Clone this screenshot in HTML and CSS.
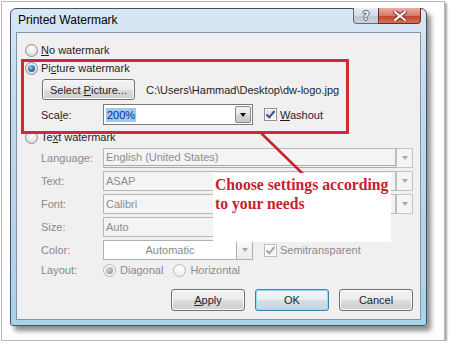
FILE: index.html
```html
<!DOCTYPE html>
<html lang="en">
<head>
  <meta charset="UTF-8">
  <meta name="viewport" content="width=device-width, initial-scale=1.0">
  <title>Printed Watermark</title>
  <link rel="stylesheet" href="styles.css">
</head>
<body>
<div class="sheet">
  <div class="window">
    <div class="titlebar">
      <span class="title">Printed Watermark</span>
      <div class="caption-buttons">
        <span class="cap-btn help">?</span>
        <span class="cap-btn close">
          <svg width="14" height="10" viewBox="0 0 14 10">
            <path d="M2 1 L12 9 M12 1 L2 9" stroke="#6b2a22" stroke-width="4" stroke-linecap="square"/>
            <path d="M2 1 L12 9 M12 1 L2 9" stroke="#fff" stroke-width="2.2" stroke-linecap="square"/>
          </svg>
        </span>
      </div>
    </div>
    <div class="client">
      <div class="option"><span class="radio"></span><span><u>N</u>o watermark</span></div>
      <div class="option second"><span class="radio checked"></span><span>Pi<u>c</u>ture watermark</span></div>
      <div class="picture-row">
        <button class="btn select">Select <u>P</u>icture...</button>
        <span class="path">C:\Users\Hammad\Desktop\dw-logo.jpg</span>
      </div>
      <div class="field-row scale-row">
        <span class="label">Sca<u>l</u>e:</span>
        <div class="combo edit">
          <span class="entry"><span class="selected">200%</span></span>
          <span class="drop"><i class="arrow"></i></span>
        </div>
        <span class="check checked"></span><span class="check-label"><u>W</u>ashout</span>
      </div>
      <div class="option third"><span class="radio"></span><span>Te<u>x</u>t watermark</span></div>

      <div class="fields">
        <div class="field-row">
          <span class="label off">Language:</span>
          <div class="combo off wide">
            <span class="entry lang">English (United States)</span>
            <span class="drop"><i class="arrow"></i></span>
          </div>
        </div>
        <div class="field-row">
          <span class="label off">Text:</span>
          <div class="combo off wide">
            <span class="entry">ASAP</span>
            <span class="drop"><i class="arrow"></i></span>
          </div>
        </div>
        <div class="field-row">
          <span class="label off">Font:</span>
          <div class="combo off wide">
            <span class="entry">Calibri</span>
            <span class="drop"><i class="arrow"></i></span>
          </div>
        </div>
        <div class="field-row">
          <span class="label off">Size:</span>
          <div class="combo off short">
            <span class="entry">Auto</span>
          </div>
        </div>
        <div class="field-row">
          <span class="label off">Color:</span>
          <div class="combo color">
            <span class="entry">Automatic</span>
            <span class="drop"><i class="arrow"></i></span>
          </div>
          <span class="check checked off"></span><span class="check-label off">Semitransparent</span>
        </div>
      </div>

      <div class="field-row layout-row">
        <span class="label off">Layout:</span>
        <span class="radio checked off"></span><span class="radio-label off">Diagonal</span>
        <span class="radio off"></span><span class="radio-label off">Horizontal</span>
      </div>

      <div class="actions">
        <button class="btn"><u>A</u>pply</button>
        <button class="btn default">OK</button>
        <button class="btn">Cancel</button>
      </div>

      <!-- annotation drawn over the dialog -->
      <div class="mark-box"></div>
      <svg class="mark-line" width="405" height="288">
        <line x1="244" y1="100" x2="287" y2="142" stroke="#c8202e" stroke-width="2.5"/>
      </svg>
      <div class="callout">Choose settings according<br>to your needs</div>
    </div>
  </div>
</div>
</body>
</html>
```

FILE: styles.css
```css
body {
  margin: 0;
  background: #fff;
  font-family: "Liberation Sans", Arial, sans-serif;
  font-size: 11px;
  color: #1e1e1e;
}

.sheet {
  box-sizing: border-box;
  width: 444px;
  height: 340px;
  margin: 1px 0 0 1px;
  padding: 6px 0 0 8px;
  border: 1px solid #b8b8b8;
  box-shadow: 2px 2px 2px rgba(0, 0, 0, 0.35);
  background: #fff;
}

.window {
  box-sizing: border-box;
  width: 417px;
  height: 318px;
  padding: 0 5px 5px 5px;
  display: flex;
  flex-direction: column;
  border: 1px solid #415364;
  border-radius: 6px 6px 3px 3px;
  background: linear-gradient(180deg, #d9e7f4 0%, #c3d9ed 30%, #b4d1ea 80%, #a6d4ec 100%);
  box-shadow: 4px 5px 5px rgba(0, 0, 0, 0.45);
}

.titlebar {
  height: 23px;
  display: flex;
  justify-content: space-between;
  align-items: flex-start;
}

.title {
  padding-left: 2px;
  line-height: 22px;
  font-size: 12px;
  color: #000;
}

.caption-buttons {
  display: flex;
  margin-top: -1px;
}

.cap-btn {
  box-sizing: border-box;
  height: 16px;
  display: flex;
  align-items: center;
  justify-content: center;
  border: 1px solid #5d6b7a;
  border-top: none;
}

.help {
  width: 25px;
  border-right: none;
  border-radius: 0 0 0 4px;
  background: linear-gradient(180deg, #e8eef4 0%, #d3dbe4 50%, #bdc7d2 51%, #c9d3dd 100%);
  font: bold 12px "DejaVu Sans", sans-serif;
  color: #f4f6f8;
  text-shadow: -1px 0 #5b6470, 1px 0 #5b6470, 0 -1px #5b6470, 0 1px #5b6470;
}

.close {
  width: 43px;
  border-color: #6e2a22;
  border-radius: 0 0 4px 0;
  background: linear-gradient(180deg, #e7aea4 0%, #d7786a 50%, #c6402f 51%, #d9704f 100%);
}

.client {
  flex: 1;
  position: relative;
  padding: 9px 7px 0 8px;
  display: flex;
  flex-direction: column;
  border: 1px solid #8497aa;
  background: #f0f0f0;
}

u {
  text-decoration: underline;
  text-underline-offset: 1px;
}

.option {
  height: 16px;
  display: flex;
  align-items: center;
  gap: 3px;
}

.option.second {
  margin-top: 2px;
}

.option.third {
  margin-top: 4px;
}

.radio {
  box-sizing: border-box;
  width: 13px;
  height: 13px;
  flex: none;
  border: 1px solid #8e8f8f;
  border-radius: 50%;
  background: radial-gradient(circle at 50% 35%, #ffffff 0%, #e4e4e4 60%, #cfcfcf 100%);
  display: flex;
  align-items: center;
  justify-content: center;
}

.radio.checked::after {
  content: "";
  width: 7px;
  height: 7px;
  border-radius: 50%;
  background: radial-gradient(circle at 40% 35%, #8fd0f6 0%, #2f86c7 45%, #0f3f70 100%);
}

.radio.off {
  border-color: #b8b8b8;
  background: radial-gradient(circle at 50% 35%, #fdfdfd 0%, #ececec 100%);
}

.radio.checked.off::after {
  background: radial-gradient(circle at 40% 35%, #d4d4d4 0%, #a4a4a4 60%, #8c8c8c 100%);
}

.picture-row {
  height: 21px;
  margin-top: 3px;
  padding-left: 17px;
  display: flex;
  align-items: center;
  gap: 11px;
}

.btn {
  box-sizing: border-box;
  height: 22px;
  padding: 0;
  font-family: inherit;
  font-size: 11px;
  color: #1e1e1e;
  border: 1px solid #707070;
  border-radius: 3px;
  background: linear-gradient(180deg, #f3f3f3 0%, #ebebeb 50%, #dddddd 51%, #cfcfcf 100%);
  box-shadow: inset 0 0 0 1px #fbfbfb;
}

.btn.select {
  width: 93px;
  height: 21px;
}

.field-row {
  height: 20px;
  display: flex;
  align-items: center;
}

.scale-row {
  height: 21px;
  margin-top: 4px;
}

.label {
  box-sizing: border-box;
  width: 78px;
  padding-left: 16px;
  flex: none;
}

.label.off,
.check-label.off,
.radio-label.off {
  color: #8a8a8a;
}

.combo {
  box-sizing: border-box;
  height: 100%;
  display: flex;
  flex: none;
}

.entry {
  flex: 1;
  box-sizing: border-box;
  padding-left: 2px;
  display: flex;
  align-items: center;
  border: 1px solid #b7b7b7;
  background: #f4f4f4;
  color: #8d8d8d;
  white-space: nowrap;
}

.drop {
  box-sizing: border-box;
  width: 17px;
  display: flex;
  align-items: center;
  justify-content: center;
  border: 1px solid #c4c4c4;
  background: #f4f4f4;
}

.arrow {
  width: 0;
  height: 0;
  border-left: 3.5px solid transparent;
  border-right: 3.5px solid transparent;
  border-top: 4px solid #a8a8a8;
}

.combo.wide {
  width: 310px;
}

.entry.lang {
  border-bottom: 3px double #a9a9a9;
}

.combo.short {
  width: 150px;
}

.combo.edit {
  width: 150px;
  padding: 0;
  border: 1px solid #7a7a7a;
  background: #fff;
}

.combo.edit .entry {
  border: none;
  background: #fff;
  color: #000;
  padding-left: 2px;
}

.selected {
  padding: 1px 1px;
  background: #9ec8f0;
  color: #10307a;
}

.combo.edit .drop {
  width: 16px;
  margin: 1px;
  border: 1px solid #8b8b8b;
  border-radius: 2px;
  background: linear-gradient(180deg, #f4f4f4 0%, #e6e6e6 50%, #d6d6d6 51%, #c8c8c8 100%);
}

.combo.edit .arrow {
  border-top-color: #111;
}

.combo.color {
  width: 150px;
}

.combo.color .entry {
  justify-content: center;
  padding-left: 0;
  border: 1px solid #b0b0b0;
  border-right: none;
  background: #fff;
  color: #8a8a8a;
}

.combo.color .drop {
  border-color: #b0b0b0;
  background: linear-gradient(180deg, #fafafa, #eaeaea);
}

.check {
  box-sizing: border-box;
  width: 13px;
  height: 13px;
  flex: none;
  margin-left: 11px;
  margin-right: 3px;
  border: 1px solid #8e8f8f;
  background: linear-gradient(135deg, #dcdcdc 0%, #f8f8f8 100%);
  box-shadow: inset 0 0 0 1px #fff;
  position: relative;
}

.check.checked::after {
  content: "";
  position: absolute;
  left: 3px;
  top: 0px;
  width: 3px;
  height: 7px;
  border-right: 2px solid #3a4f8f;
  border-bottom: 2px solid #3a4f8f;
  transform: rotate(40deg);
}

.check.off {
  border-color: #bcbcbc;
  background: #f6f6f6;
}

.check.checked.off::after {
  border-color: #a8a8a8;
}

.fields {
  margin-top: 3px;
  display: flex;
  flex-direction: column;
  gap: 3px;
}

.layout-row {
  height: 16px;
  margin-top: 2px;
}

.radio-label {
  margin: 0 10px 0 4px;
}

.actions {
  margin-top: 11px;
  display: flex;
  justify-content: flex-end;
  gap: 10px;
}

.actions .btn {
  width: 74px;
}

.btn.default {
  border-color: #3c7fb1;
  background: linear-gradient(180deg, #f2f7fa 0%, #e6eef3 50%, #d4dfe6 51%, #c8d6df 100%);
  box-shadow: inset 0 0 0 1px #8fdcf6;
}

.mark-box {
  position: absolute;
  left: 4px;
  top: 26px;
  width: 322px;
  height: 69px;
  border: 3px solid #cf2a36;
}

.mark-line {
  position: absolute;
  left: 0;
  top: 0;
}

.callout {
  position: absolute;
  left: 196px;
  top: 140px;
  width: 178px;
  height: 69px;
  box-sizing: border-box;
  padding: 2px 0 0 2px;
  background: #fff;
  font: bold 15.7px/19px "Liberation Serif", "Times New Roman", serif;
  color: #c8202e;
}
```
